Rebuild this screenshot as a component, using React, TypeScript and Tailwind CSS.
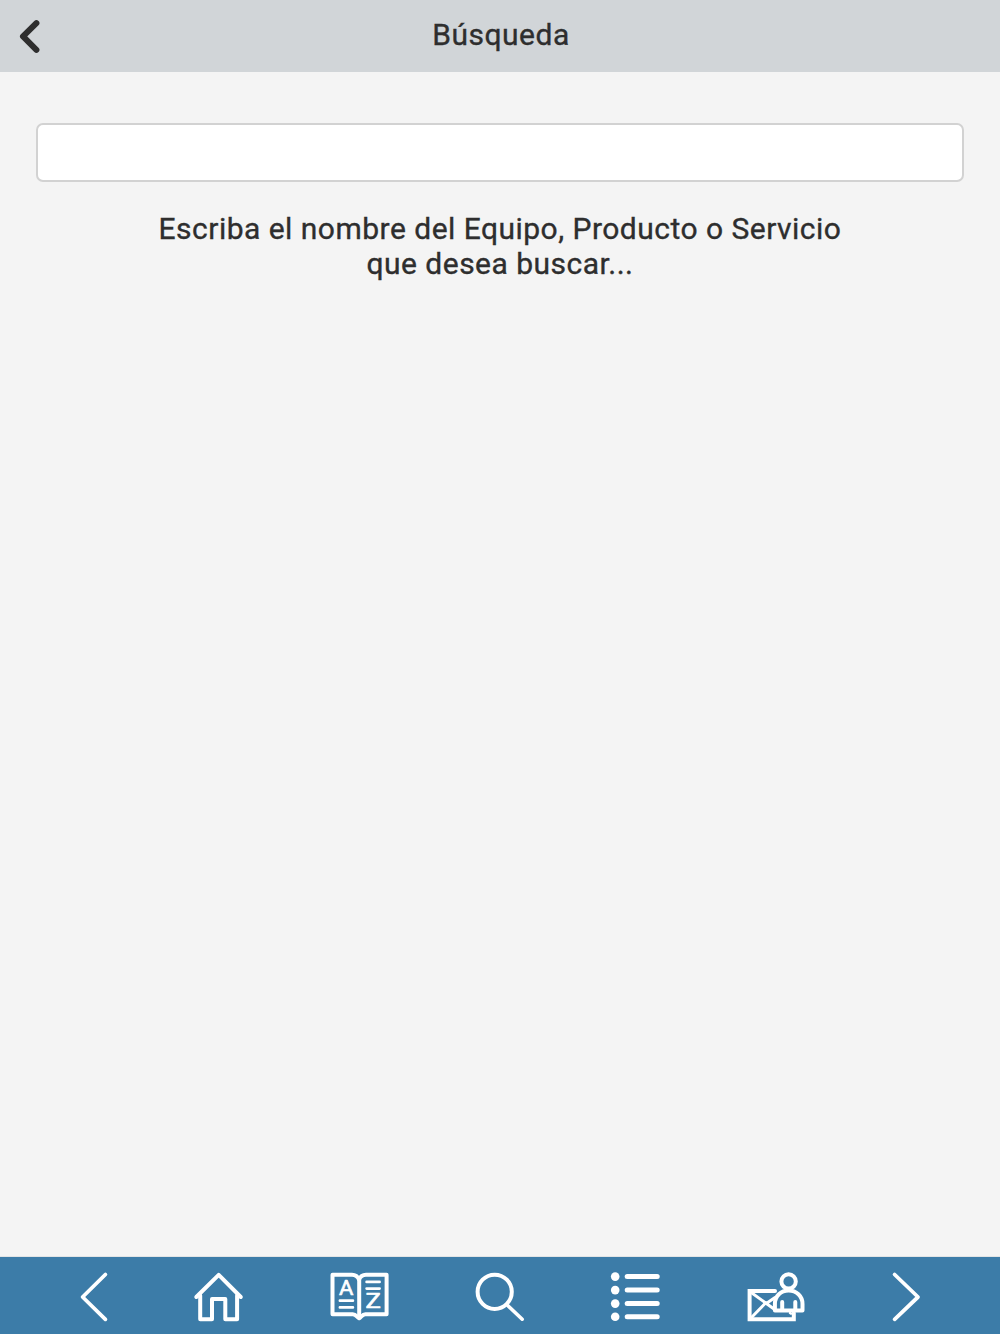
import { useState } from "react";
import type { ReactNode } from "react";

interface NavItem {
  label: string;
  icon: ReactNode;
}

const stroke = {
  fill: "none",
  stroke: "currentColor",
  strokeWidth: 4,
  strokeLinecap: "round" as const,
  strokeLinejoin: "round" as const,
  overflow: "visible",
};

function PreviousIcon() {
  return (
    <svg width="27" height="50" viewBox="0 0 27 50" {...stroke} strokeWidth={3.8}>
      <path d="M25.4 2.5 2.6 25 25.4 47.3" />
    </svg>
  );
}

function NextIcon() {
  return (
    <svg width="28" height="50" viewBox="0 0 28 50" {...stroke} strokeWidth={3.8}>
      <path d="M2.6 2.5 26 25 2.6 47.3" />
    </svg>
  );
}

function HomeIcon() {
  return (
    <svg width="48" height="50" viewBox="0 0 48 50" {...stroke}>
      <path d="M2.3 25 24.7 2.8 46.8 25" />
      <path d="M6.2 23.5v23.7h11.8V26.9h13.3v20.3h11.8V23.5" />
    </svg>
  );
}

function GlossaryIcon() {
  return (
    <svg width="58" height="50" viewBox="0 0 58 50" {...stroke}>
      <path d="M29 7.5C27.5 3.8 25 2.7 22 2.7H2.5v39.6h20.3c3 0 4 2.5 6.4 4 2.2-1.5 3.2-4 6.2-4h21.2V2.7H36c-3 0-5.5 1.1-7 4.8Z" />
      <path d="M29.2 6v39" />
      <path d="M9.9 28.7h13M9.9 35.4h13M36.6 9.9h13M36.6 16.6h13" strokeWidth="2.7" />
      <g
        className="font-['Roboto',sans-serif] font-normal"
        fill="currentColor"
        stroke="currentColor"
        strokeWidth="0.6"
        fontSize="19.5"
      >
        <text x="9" y="22.8" textLength="14.4" lengthAdjust="spacingAndGlyphs">A</text>
        <text x="35.4" y="36.4" textLength="15.4" lengthAdjust="spacingAndGlyphs">Z</text>
      </g>
    </svg>
  );
}

function SearchIcon() {
  return (
    <svg width="48" height="50" viewBox="0 0 48 50" {...stroke}>
      <circle cx="19.7" cy="19.8" r="17.1" />
      <path d="M32.2 33 47.2 47.2" strokeWidth="3.6" />
    </svg>
  );
}

function ListIcon() {
  return (
    <svg width="49" height="50" viewBox="0 0 49 50" {...stroke} strokeWidth={5}>
      {[4.6, 18.1, 31.6, 44.8].map((y) => (
        <g key={y}>
          <circle cx="5.2" cy={y} r="4.3" fill="currentColor" stroke="none" />
          <path d={`M17.2 ${y}h30`} />
        </g>
      ))}
    </svg>
  );
}

function ContactIcon() {
  return (
    <svg width="58" height="50" viewBox="0 0 58 50" {...stroke}>
      <path d="M28 18.9H2.6v28.3h44.2V41" strokeLinejoin="miter" />
      <path d="m3.5 20 23.5 17M3.5 46.5 19 30.5M20 31l8-5.5" strokeWidth="3" />
      <path d="m43 41 1 .6" strokeWidth="2.4" />
      <circle cx="41.6" cy="9.4" r="7.2" />
      <path d="M27.9 38.4V32c0-8 6-13.4 13.7-13.4S55.5 24 55.5 32v6.4Z" />
      <path d="M35.2 30v8M48.3 30v8" />
    </svg>
  );
}

const navItems: NavItem[] = [
  { label: "Anterior", icon: <PreviousIcon /> },
  { label: "Inicio", icon: <HomeIcon /> },
  { label: "Glosario", icon: <GlossaryIcon /> },
  { label: "Buscar", icon: <SearchIcon /> },
  { label: "Lista", icon: <ListIcon /> },
  { label: "Contacto", icon: <ContactIcon /> },
  { label: "Siguiente", icon: <NextIcon /> },
];

export default function App() {
  const [query, setQuery] = useState("");

  return (
    <div className="flex h-screen flex-col bg-[#f4f4f4] font-['Roboto',sans-serif] text-[30px] font-normal text-[#2e2e2e] [-webkit-text-stroke:0.35px_#2e2e2e]">
      {/* Header */}
      <header className="grid h-[72px] shrink-0 grid-cols-[1fr_auto_1fr] items-center bg-[#d1d5d8]">
        <button aria-label="Volver" className="ml-[19px] justify-self-start">
          <svg width="21" height="34" viewBox="0 0 21 34" {...stroke} strokeWidth={6}>
            <path d="M17.4 4.2 4 17.4 17.4 30.8" />
          </svg>
        </button>
        <h1 className="pb-0.5 pl-[2px] leading-9 tracking-[0.5px]">Búsqueda</h1>
      </header>

      {/* Search form */}
      <main className="flex-1 px-9 pt-[51px]">
        <input
          type="text"
          aria-label="Búsqueda"
          value={query}
          onChange={(e) => setQuery(e.target.value)}
          className="block h-[59px] w-full rounded-[7px] border-2 border-[#d2d2d2] bg-white px-4 outline-none"
        />
        <p className="mt-[29px] text-center leading-[35px] tracking-[0.48px]">
          Escriba el nombre del Equipo, Producto o Servicio
          <br />
          que desea buscar...
        </p>
      </main>

      {/* Bottom navigation */}
      <nav className="flex h-[78px] shrink-0 items-center justify-between border-t border-[#e2e4e5] bg-[#3c7ca8] px-20 pt-[3px] text-white">
        {navItems.map((item) => (
          <button key={item.label} aria-label={item.label}>
            {item.icon}
          </button>
        ))}
      </nav>
    </div>
  );
}
